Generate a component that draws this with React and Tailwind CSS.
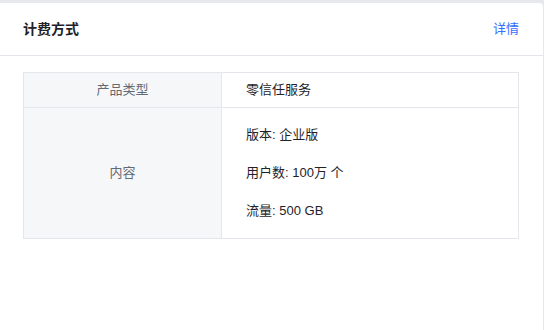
export default function App() {
  const items = ['版本: 企业版', '用户数: 100万 个', '流量: 500 GB']

  return (
    <div
      className="h-[330px] w-[544px] overflow-hidden bg-[#e6e8ee] pt-[3px] pr-px"
      style={{ fontFamily: '"Liberation Sans", "Noto Sans CJK SC", sans-serif' }}
    >
      <div className="h-full rounded-tr-[4px] bg-white">
        <div className="flex h-[53px] items-center justify-between border-b border-[#e4e6ec] pr-[24px] pl-[23px]">
          <h2 className="text-[14px] font-bold text-[#1f2329]">计费方式</h2>
          <a className="text-[13px] text-[#3370ff]">详情</a>
        </div>

        <div className="pt-[16px] pr-[24px] pl-[23px]">
          <table className="w-full border-collapse text-[13px]">
            <tbody>
              <tr>
                <td className="h-[35px] w-[198px] border border-[#e4e6ec] bg-[#f6f7f9] text-center text-[#646a73]">
                  产品类型
                </td>
                <td className="border border-[#e4e6ec] pl-[24px] text-[#1f2329]">零信任服务</td>
              </tr>
              <tr>
                <td className="border border-[#e4e6ec] bg-[#f6f7f9] text-center text-[#646a73]">内容</td>
                <td className="border border-[#e4e6ec] py-[17px] pl-[24px] text-[#1f2329]">
                  <div className="flex flex-col gap-[18px]">
                    {items.map((item) => (
                      <p key={item} className="leading-[20px]">
                        {item}
                      </p>
                    ))}
                  </div>
                </td>
              </tr>
            </tbody>
          </table>
        </div>
      </div>
    </div>
  )
}
